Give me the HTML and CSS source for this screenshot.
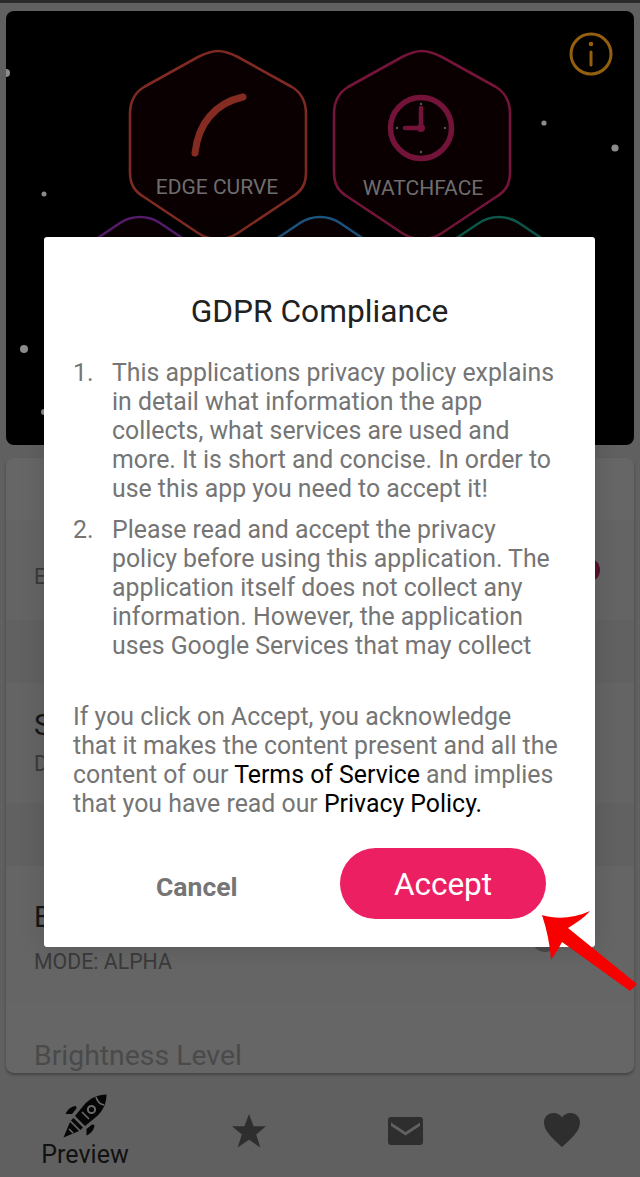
FILE: index.html
```html
<!DOCTYPE html>
<html lang="en">
<head>
<meta charset="utf-8">
<title>GDPR Compliance</title>
<link rel="stylesheet" href="styles.css">
</head>
<body>
<div class="page">
  <div class="statusbar"></div>
  <section class="hero">
    <svg class="hero-art" viewBox="6 11 628 434" width="628" height="434">
      <g class="hex hex-purple"><path d="M140 217 C148 217 154 219 160 223 L212 258 V300 H68 V258 L120 223 C126 219 132 217 140 217 Z"/></g>
      <g class="hex hex-blue"><path d="M320 217 C328 217 334 219 340 223 L392 258 V300 H248 V258 L300 223 C306 219 312 217 320 217 Z"/></g>
      <g class="hex hex-green"><path d="M499 217 C507 217 513 219 519 223 L571 258 V300 H427 V258 L479 223 C485 219 491 217 499 217 Z"/></g>
      <g class="hex hex-red"><path d="M218 51 C226 51 232 54 238 57 L292 87 C302 93 306 102 306 114 V172 C306 184 302 191 292 197 L238 233 C226 241 210 241 198 233 L144 197 C134 191 130 184 130 172 V114 C130 102 134 93 144 87 L198 57 C204 54 210 51 218 51 Z"/></g>
      <g class="hex hex-maroon"><path d="M422 51 C430 51 436 54 442 57 L496 87 C506 93 510 102 510 114 V172 C510 184 506 191 496 197 L442 233 C430 241 414 241 402 233 L348 197 C338 191 334 184 334 172 V114 C334 102 338 93 348 87 L402 57 C408 54 414 51 422 51 Z"/></g>
      <path class="curve" d="M195 153 C198 124 215 103 243 97"/>
      <circle class="clock" cx="421" cy="128" r="30.5"/>
      <path class="hands" d="M421 108 V128 H405"/>
      <circle class="hub" cx="421" cy="128" r="4"/>
      <g class="ticks">
        <circle cx="421" cy="104" r="1.2"/>
        <circle cx="445" cy="128" r="1.2"/>
        <circle cx="421" cy="152" r="1.2"/>
        <circle cx="397" cy="128" r="1.2"/>
      </g>
      <text class="hero-label" x="217" y="194">EDGE CURVE</text>
      <text class="hero-label" x="423" y="195">WATCHFACE</text>
      <ellipse class="info-ring" cx="591" cy="54" rx="20" ry="20"/>
      <circle class="info-mark" cx="591" cy="44" r="2.3"/>
      <path class="info-stem" d="M591 52 V65"/>
      <g class="stars">
        <circle cx="6" cy="73" r="4"/>
        <circle cx="544" cy="123" r="2.6"/>
        <circle cx="615" cy="148" r="3.6"/>
        <circle cx="44" cy="194" r="2.5"/>
        <circle cx="24" cy="349" r="4"/>
        <circle cx="44" cy="412" r="3"/>
      </g>
    </svg>
  </section>
  <section class="card">
    <div class="band band-a"></div>
    <div class="band band-b"><span class="row-small">E</span><span class="toggle-on"></span></div>
    <div class="band band-c"></div>
    <div class="band band-d"><span class="row-title">S</span><span class="row-small">D</span></div>
    <div class="band band-e"></div>
    <div class="band band-f"><span class="row-title">E</span><span class="row-small">MODE: ALPHA</span><span class="toggle-off"></span></div>
    <div class="brightness">Brightness Level</div>
  </section>
  <nav class="nav">
    <div class="nav-item">
      <svg class="rocket" viewBox="0 0 46 46" width="46" height="46">
        <path d="M44.5 1.5 C36 1.5 28 5 22 12 L13 23 L23 33 L34 24 C41 18 44.5 10 44.5 1.5 Z"/>
        <path d="M14 13 C9 13.5 5.5 16.5 3.5 21 L10 21 L14.5 15.5 Z"/>
        <path d="M32.5 32 C32 37 29 40.5 24.5 42.5 L24.5 36 L30 31.5 Z"/>
        <path d="M11.5 25 L9 27.5 L18.5 37 L21 34.5 Z"/>
        <path d="M8 29 L1.5 44.5 L17 38 Z"/>
        <path class="rocket-line" d="M34 4 C35 8 38 11 42 12"/>
        <path class="rocket-line" d="M20 19 L27 26"/>
        <path class="rocket-line" d="M7 36 L11 40"/>
        <circle class="rocket-ring" cx="29.5" cy="16.5" r="3.6"/>
      </svg>
      <span class="nav-label">Preview</span>
    </div>
    <div class="nav-item">
      <svg class="nav-icon" viewBox="0 0 36 36" width="36" height="36"><path d="M18 1 L22.6 13.3 L35 13.3 L25.2 21.4 L29.3 34.5 L18 26.7 L6.7 34.5 L10.8 21.4 L1 13.3 L13.4 13.3 Z"/></svg>
    </div>
    <div class="nav-item">
      <svg class="nav-icon mail" viewBox="0 0 35 28" width="35" height="28"><path d="M3 0 H32 Q35 0 35 3 V25 Q35 28 32 28 H3 Q0 28 0 25 V3 Q0 0 3 0 Z M3 5.5 L17.5 15 L32 5.5 V9 L17.5 18.5 L3 9 Z" fill-rule="evenodd"/></svg>
    </div>
    <div class="nav-item">
      <svg class="nav-icon" viewBox="0 0 36 34" width="36" height="34"><path d="M18 34 C8 25 0 18 0 9.5 C0 4 4 0 9.5 0 C13 0 16.3 1.7 18 4.5 C19.7 1.7 23 0 26.5 0 C32 0 36 4 36 9.5 C36 18 28 25 18 34 Z"/></svg>
    </div>
  </nav>
  <div class="dialog">
    <h1 class="dialog-title">GDPR Compliance</h1>
    <div class="dialog-scroll">
      <ol class="terms">
        <li>This applications privacy policy explains in detail what information the app collects, what services are used and more. It is short and concise. In order to use this app you need to accept it!</li>
        <li>Please read and accept the privacy policy before using this application. The application itself does not collect any information. However, the application uses Google Services that may collect</li>
      </ol>
    </div>
    <p class="consent">If you click on Accept, you acknowledge that it makes the content present and all the content of our <a class="link">Terms of Service</a> and implies that you have read our <a class="link">Privacy Policy.</a></p>
    <div class="actions">
      <button class="btn-cancel">Cancel</button>
      <button class="btn-accept">Accept</button>
    </div>
  </div>
  <svg class="arrow" viewBox="0 0 100 82" width="100" height="82">
    <path d="M2 5 C18 10 34 8 50 1 C44 8 36 13 28 18 L97 74 L90 81 L22 32 C18 40 14 45 11 50 C10 35 7 20 2 5 Z"/>
  </svg>
</div>
</body>
</html>
```
FILE: styles.css
```css
* { box-sizing: border-box; }
html, body { margin: 0; padding: 0; }
body { font-family: Roboto, "Liberation Sans", sans-serif; background: #606060; }

.page { position: relative; width: 640px; height: 1177px; overflow: hidden; background: #606060; }
.statusbar { height: 3px; background: #2b2b2b; margin-bottom: 8px; }

.hero { height: 434px; margin: 0 6px 13px; background: #000; border-radius: 8px; overflow: hidden; }
.hero-art { display: block; }
.hex path { fill: #0a0002; stroke-width: 2.6; }
.hex-red path { stroke: #7e2a22; }
.hex-maroon path { stroke: #74143a; }
.hex-purple path { stroke: #551c6b; }
.hex-blue path { stroke: #1c5480; }
.hex-green path { stroke: #0d574b; }
.curve { fill: none; stroke: #842c22; stroke-width: 7; stroke-linecap: round; }
.clock { fill: none; stroke: #74133a; stroke-width: 5.5; }
.hands { fill: none; stroke: #74133a; stroke-width: 4.5; stroke-linecap: round; }
.hub { fill: #74133a; }
.ticks circle { fill: #555; }
.hero-label { fill: #6e6e6e; font-family: Roboto, sans-serif; font-size: 21px; text-anchor: middle; }
.info-ring { fill: none; stroke: #94600f; stroke-width: 3; }
.info-mark { fill: #94600f; }
.info-stem { stroke: #94600f; stroke-width: 3; stroke-linecap: round; }
.stars circle { fill: #8c8c8c; }

.card { height: 615px; margin: 0 6px; background: #666; border-radius: 8px; overflow: hidden; box-shadow: 0 2px 3px rgba(0,0,0,.3); color: #3a3a3a; }
.band { position: relative; padding-left: 28px; display: flex; flex-direction: column; justify-content: center; }
.band-a { height: 62px; background: #666; }
.band-b { height: 100px; background: #646464; padding-top: 14px; }
.band-c { height: 63px; background: #616161; }
.band-d { height: 120px; background: #646464; }
.band-e { height: 63px; background: #616161; }
.band-f { height: 138px; background: #656565; padding-top: 3px; }
.row-title { font-size: 29px; line-height: 38px; color: #161616; }
.row-small { font-size: 21.3px; line-height: 28px; color: #3a3a3a; }
.band-d .row-title { margin-top: -3px; }
.band-d .row-small { margin-top: 6px; }
.band-f .row-small { margin-top: 12px; }
.toggle-on { position: absolute; right: 34px; top: 38px; width: 24px; height: 24px; border-radius: 50%; background: #56102e; }
.toggle-off { position: absolute; right: 76px; top: 60px; width: 26px; height: 26px; border-radius: 50%; background: #4a4a4a; }
.brightness { padding: 35px 0 0 28px; font-size: 28.4px; line-height: 34px; color: #4a4a4a; }

.nav { display: grid; grid-template-columns: 170px 157px 157px 156px; height: 104px; }
.nav-item { display: flex; flex-direction: column; align-items: center; justify-content: flex-start; padding-top: 40px; }
.nav-item:first-child { padding-top: 20px; }
.nav-icon { fill: #2e2e2e; display: block; }
.mail { margin-top: 4px; }
.rocket { fill: #060606; display: block; }
.rocket-ring { fill: none; stroke: #6a6a6a; stroke-width: 2; }
.rocket-line { fill: none; stroke: #6a6a6a; stroke-width: 1.6; }
.nav-label { font-size: 25px; line-height: 30px; color: #111; margin-top: 1px; }

.dialog { position: absolute; left: 44px; top: 237px; width: 551px; height: 710px; background: #fff; border-radius: 3px; padding: 0 29px; color: #757575; box-shadow: 0 0 24px rgba(0,0,0,.14); }
.dialog-title { margin: 0; padding-top: 56px; font-size: 31.7px; line-height: 38px; font-weight: 400; color: #212121; text-align: center; }
.dialog-scroll { margin-top: 27px; height: 304px; overflow: hidden; }
.terms { margin: 0; padding: 0; list-style: none; counter-reset: term; font-size: 24.85px; line-height: 29px; }
.terms li { display: flex; counter-increment: term; margin-bottom: 12px; }
.terms li::before { content: counter(term) "."; flex: 0 0 39px; }
.consent { margin: 40px 7px 0 0; font-size: 24.85px; line-height: 29px; }
.link { color: #000; }
.actions { display: flex; justify-content: space-between; align-items: center; margin-top: 30px; padding-right: 20px; }
.btn-cancel { margin-left: 83px; border: 0; background: none; padding: 6px 0 0; font: 700 26.5px/34px Roboto, sans-serif; color: #757575; }
.btn-accept { width: 206px; height: 71px; border: 0; border-radius: 36px; padding: 3px 0 0; background: #ec1f63; color: #fff; font: 400 31.5px/36px Roboto, sans-serif; }

.arrow { position: absolute; left: 540px; top: 910px; fill: #f60000; }
```
